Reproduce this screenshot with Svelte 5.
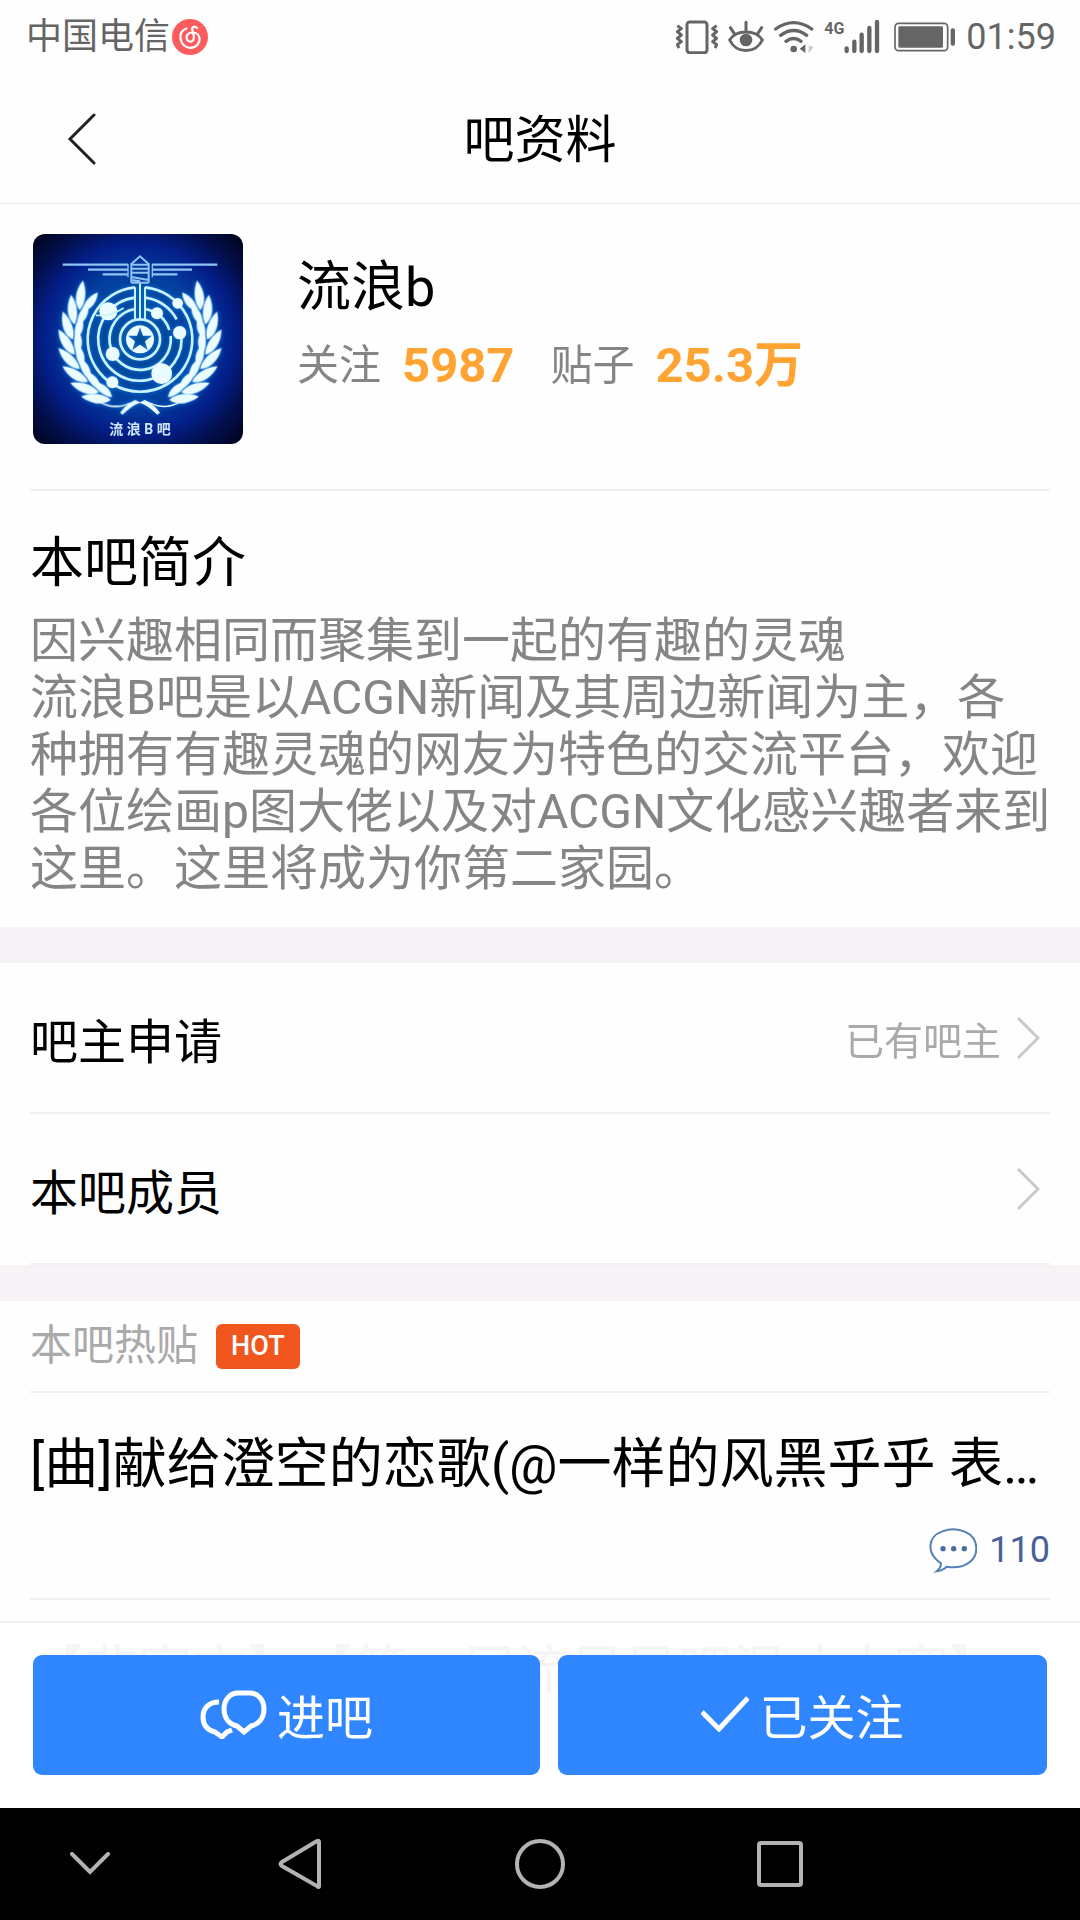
<script>
  const forum = {
    name: '流浪b',
    follows: '5987',
    posts: '25.3万',
    intro: [
      '因兴趣相同而聚集到一起的有趣的灵魂',
      '流浪B吧是以ACGN新闻及其周边新闻为主，各种拥有有趣灵魂的网友为特色的交流平台，欢迎各位绘画p图大佬以及对ACGN文化感兴趣者来到这里。这里将成为你第二家园。'
    ]
  };

  const links = [
    { label: '吧主申请', note: '已有吧主' },
    { label: '本吧成员', note: '' }
  ];

  const threads = [
    { title: '[曲]献给澄空的恋歌(@一样的风黑乎乎 表…', replies: 110 },
    { title: '【非官方】【第一届流星星吧温才大赛】', replies: 0 }
  ];

  // Laurel leaves, as rotations around the centre of the emblem
  const leafAngles = [-63, -76, -89, -102, -115, -128, -141, -153];

  // Dots sitting on the orbits: x, y, radius
  const planets = [
    [265, 274, 27],
    [411, 280, 18],
    [473, 250, 16],
    [479, 338, 20],
    [278, 402, 21],
    [425, 461, 31],
    [277, 487, 18]
  ];
</script>

<div class="page">
  <div class="status">
    <div class="carrier">
      <span>中国电信</span>
      <svg width="36" height="36" viewBox="0 0 36 36" aria-hidden="true">
        <circle cx="18" cy="18" r="18" fill="#fd5c5c" />
        <g fill="none" stroke="#fff" stroke-width="2.2" stroke-linecap="round">
          <path d="M14.500 9.500C10 11 8 15 8.500 19.500C9.200 25 13.500 29 18.500 28.800C24.500 28.500 28 24 27.600 19.500C27.200 15.500 24 13.500 20 13.500C16 13.700 14.200 16.500 14.600 19.200C15 22 18 23.500 20.500 21.800C23 20 22 17 21 13.500L20.200 10.500C20 7.500 22.500 7 25 8.800" />
        </g>
      </svg>
    </div>
    <div class="indicators">
      <svg width="42" height="34" viewBox="54 57 126 102" fill="none" stroke="#656565" aria-hidden="true">
        <rect x="87" y="63" width="60" height="92" rx="8" stroke-width="9" />
        <path d="M58 74l12 9-12 9 12 10-12 10 12 10-12 9 5 10M176 74l-12 9 12 9-12 10 12 10-12 10 12 9-5 10" stroke-width="9" stroke-linejoin="round" />
      </svg>
      <svg width="36" height="34" viewBox="216 60 108 102" fill="none" stroke="#656565" stroke-width="9" stroke-linecap="round" aria-hidden="true">
        <path d="M221 120C240 88 300 88 319 120C300 162 240 162 221 120Z" />
        <path d="M270 67v23M223 83l12 18M317 83l-12 18" />
        <circle cx="270" cy="120" r="19" fill="#656565" stroke="none" />
      </svg>
      <svg width="40" height="34" viewBox="352 57 120 102" fill="none" stroke="#656565" stroke-width="10" stroke-linecap="round" aria-hidden="true">
        <path d="M357 84Q411 46 465 84M372 103Q411 74 450 103M388 121Q411 104 433 121" />
        <circle cx="411" cy="144" r="10" fill="#656565" stroke="none" />
        <path d="M446 130v26l-17-13z" fill="#656565" stroke="none" />
        <path d="M456 133v24l15-18z" fill="#ccc" stroke="none" />
      </svg>
      <div class="signal">
        <span>4G</span>
        <svg width="36" height="34" viewBox="554 57 108 102" stroke="#656565" stroke-width="13" stroke-linecap="round" aria-hidden="true">
          <path d="M562 142v8M585 122v28M607 101v49M630 81v69M653 63v87" />
        </svg>
      </div>
      <svg width="62" height="30" viewBox="706 64 186 90" aria-hidden="true">
        <rect x="709" y="68" width="158" height="82" rx="11" fill="none" stroke="#656565" stroke-width="5" />
        <rect x="719" y="77" width="134" height="64" rx="4" fill="#656565" />
        <rect x="876" y="83" width="13" height="52" rx="6" fill="#656565" />
      </svg>
      <time>01:59</time>
    </div>
  </div>

  <header>
    <button class="back" aria-label="返回">
      <svg width="30" height="54" viewBox="0 0 30 54" aria-hidden="true">
        <path d="M28 3L4 27L28 51" fill="none" stroke="#222" stroke-width="3" stroke-linecap="round" />
      </svg>
    </button>
    <h1>吧资料</h1>
  </header>

  <main>
    <section class="profile">
      <svg class="avatar" viewBox="39 42 630 630" role="img" aria-label="流浪B吧">
        <defs>
          <radialGradient id="sky" cx="50%" cy="50%" r="68%">
            <stop offset="0" stop-color="#044a94" />
            <stop offset="0.45" stop-color="#04409f" />
            <stop offset="0.66" stop-color="#031f8a" />
            <stop offset="0.84" stop-color="#020f4c" />
            <stop offset="1" stop-color="#010522" />
          </radialGradient>
          <filter id="glow" x="-20%" y="-20%" width="140%" height="140%">
            <feGaussianBlur stdDeviation="7" />
          </filter>
          <g id="branch">
            {#each leafAngles as angle}
              <g transform="rotate({angle}) translate(0 -203)">
                <path d="M-4 2C6 -22 38 -38 80 -30C58 -6 28 8 -4 2Z" />
                <path d="M-4 10C20 2 50 8 68 26C40 38 12 32 -4 10Z" />
              </g>
            {/each}
            <path d="M-150 168C-90 214 -50 200 -14 182L2 190C-20 196 -38 212 -52 226L-60 220C-50 208 -44 200 -34 194C-70 212 -110 206 -150 168Z" />
          </g>
          <g id="emblem">
            <g transform="translate(360 358)" stroke="none">
              <use href="#branch" />
              <use href="#branch" transform="scale(-1 1)" />
            </g>
            <g fill="none" stroke-width="8">
              <path d="M345 202A157 157 0 1 0 375 202" />
              <path d="M345 202V298M375 202V298M360 190V300" stroke-width="6" />
              <path d="M345 233A125 125 0 1 0 482 332" />
              <path d="M375 233A125 125 0 0 1 470 298" />
              <path d="M345 267A92 92 0 1 0 452 348" />
              <path d="M375 267A92 92 0 0 1 448 330" />
              <circle cx="360" cy="358" r="60" />
            </g>
            <path stroke="none" fill-rule="evenodd" d="M360 316a42 42 0 1 0 .1 0zM360 322l9 25h27l-21 17 8 26-23-16-23 16 8-26-21-17h27z" />
            {#each planets as [x, y, r]}
              <circle cx={x} cy={y} {r} stroke="none" />
            {/each}
            <path d="M228 286Q270 290 311 264" fill="none" stroke-width="5" />
          </g>
        </defs>
        <rect x="39" y="42" width="630" height="630" fill="url(#sky)" />
        <use href="#emblem" fill="#1482e8" stroke="#1482e8" filter="url(#glow)" />
        <use href="#emblem" fill="#eafcff" stroke="#c9f3ff" />
        <g fill="none" stroke="#8fc4f4" stroke-width="7">
          <path d="M128 134H324M204 149H324M248 163H324M592 134H396M516 149H396M472 163H396" />
          <path d="M324 132V172M397 132V172" stroke-width="4" />
          <path d="M334 188V132L360 109L386 132V188M334 134H386M334 146H386M334 158H386M334 171L386 180M334 180L360 184M334 188H386" stroke-width="6" />
        </g>
        <text x="360" y="642" text-anchor="middle">流 浪 B 吧</text>
      </svg>
      <div class="summary">
        <h2>{forum.name}</h2>
        <dl>
          <div><dt>关注</dt><dd>{forum.follows}</dd></div>
          <div><dt>贴子</dt><dd>{forum.posts}</dd></div>
        </dl>
      </div>
    </section>

    <section class="intro">
      <h2>本吧简介</h2>
      {#each forum.intro as line}
        <p>{line}</p>
      {/each}
    </section>

    <nav class="links">
      {#each links as link}
        <a href="#top">
          <span>{link.label}</span>
          <span class="note">{link.note}</span>
          <svg width="24" height="44" viewBox="0 0 24 44" aria-hidden="true">
            <path d="M2 2L22 22L2 42" fill="none" stroke="#c8c8cc" stroke-width="3" />
          </svg>
        </a>
      {/each}
    </nav>

    <section class="hot">
      <div class="hot-head">
        <h3>本吧热贴</h3>
        <span class="badge">HOT</span>
      </div>
      {#each threads as thread}
        <article>
          <a href="#top">{thread.title}</a>
          {#if thread.replies}
            <div class="replies">
              <svg width="48" height="45" viewBox="688 384 144 135" aria-hidden="true">
                <path d="M724 490C680 462 682 410 728 394C776 376 830 400 830 445C830 488 786 508 741 500Q728 512 711 514Q724 504 724 490Z" fill="none" stroke="#5580b8" stroke-width="6" />
                <g fill="#4a6aa5">
                  <circle cx="730" cy="446" r="8" />
                  <circle cx="762" cy="446" r="8" />
                  <circle cx="794" cy="446" r="8" />
                </g>
              </svg>
              <span>{thread.replies}</span>
            </div>
          {/if}
        </article>
      {/each}
    </section>
  </main>

  <div class="dock">
    <div class="actions">
      <button class="enter">
        <svg width="67" height="49" viewBox="0 0 67 49" fill="none" stroke="#fff" stroke-width="5" aria-hidden="true">
          <path d="M38 3H50C58 3 64 10 64 19C64 28 59 34 51 36L44 42L37 36C29 34 24 28 24 19C24 10 30 3 38 3Z" />
          <path d="M19 12C9 12 3 18 3 27C3 35 7 40 15 42L22 47L27 42L32 40" />
        </svg>
        进吧
      </button>
      <button class="followed">
        <svg width="48" height="36" viewBox="0 0 48 36" aria-hidden="true">
          <path d="M1 16L18 33L47 2" fill="none" stroke="#fff" stroke-width="5" />
        </svg>
        已关注
      </button>
    </div>
    <div class="keys">
      <button aria-label="收起">
        <svg width="40" height="24" viewBox="0 0 40 24"><path d="M2 2L20 20L38 2" /></svg>
      </button>
      <button aria-label="后退">
        <svg width="44" height="52" viewBox="0 0 44 52"><path d="M41 4V48Q41 50 39 48L4 28Q1 26 4 24L39 3Q41 2 41 4Z" /></svg>
      </button>
      <button aria-label="主页">
        <svg width="50" height="50" viewBox="0 0 50 50"><circle cx="25" cy="25" r="23" /></svg>
      </button>
      <button aria-label="最近任务">
        <svg width="46" height="46" viewBox="0 0 46 46"><rect x="2" y="2" width="42" height="42" rx="2" /></svg>
      </button>
    </div>
  </div>
</div>

<style>
  :global(body) {
    margin: 0;
    background: #fefefe;
  }

  .page {
    box-sizing: border-box;
    height: 100vh;
    overflow: hidden;
    font-family: Roboto, 'Noto Sans CJK SC', sans-serif;
    text-spacing-trim: space-all;
    color: #000;
  }

  h1, h2, h3, p, dl, dd {
    margin: 0;
    font-weight: 400;
  }

  svg {
    display: block;
    flex-shrink: 0;
  }

  a {
    color: inherit;
    text-decoration: none;
  }

  button {
    padding: 0;
    border: none;
    background: none;
    font: inherit;
    cursor: pointer;
  }

  .status {
    display: flex;
    justify-content: space-between;
    align-items: center;
    height: 74px;
    padding: 0 24px 0 26px;
    font-size: 36px;
    line-height: 48px;
    color: #656565;
  }

  .carrier,
  .indicators {
    display: flex;
    align-items: center;
  }

  .carrier {
    gap: 2px;
  }

  .indicators {
    gap: 10px;
  }

  .signal {
    display: flex;
    align-items: flex-start;
    padding-right: 4px;
  }

  .signal span {
    font-size: 16px;
    line-height: 18px;
    font-weight: 700;
  }

  header {
    display: grid;
    grid-template-columns: 160px 1fr 160px;
    align-items: center;
    height: 129px;
    border-bottom: 1px solid #eee;
  }

  .back {
    display: flex;
    align-items: center;
    height: 100%;
    padding-left: 66px;
  }

  h1 {
    padding-top: 4px;
    font-size: 51px;
    line-height: 72px;
    text-align: center;
  }

  .profile {
    display: flex;
    align-items: flex-start;
    gap: 54px;
    margin: 0 30px;
    padding: 30px 3px 45px;
    border-bottom: 2px solid #f0f0f0;
  }

  .avatar {
    width: 210px;
    height: 210px;
    border-radius: 12px;
  }

  .avatar text {
    fill: #cfe6fb;
    font-size: 42px;
    font-weight: 700;
  }

  .summary {
    padding-top: 18px;
  }

  h2 {
    font-size: 54px;
    line-height: 72px;
  }

  dl {
    display: flex;
    gap: 36px;
    margin-top: 12px;
  }

  dl div {
    display: flex;
    align-items: center;
    gap: 21px;
    line-height: 60px;
  }

  dt {
    font-size: 42px;
    color: #858585;
  }

  dd {
    font-size: 49px;
    font-weight: 700;
    color: #ffa432;
  }

  .intro {
    padding: 37px 28px 30px 30px;
  }

  .intro h2 {
    margin-bottom: 12px;
  }

  .intro p {
    font-size: 48px;
    line-height: 57px;
    color: #858585;
  }

  .links {
    border-top: 36px solid #f6f2f6;
    border-bottom: 36px solid #f6f2f6;
    padding: 0 30px;
  }

  .links a {
    display: flex;
    align-items: center;
    gap: 15px;
    height: 149px;
    padding-right: 10px;
    border-bottom: 2px solid #f0f0f2;
    font-size: 48px;
  }

  .note {
    margin-left: auto;
    font-size: 39px;
    color: #aaa;
  }

  .hot {
    padding: 0 30px;
  }

  .hot-head {
    display: flex;
    align-items: center;
    gap: 18px;
    height: 90px;
    border-bottom: 2px solid #f0f0f2;
  }

  h3 {
    font-size: 42px;
    line-height: 60px;
    color: #aaa;
  }

  .badge {
    padding: 0 15px;
    border-radius: 6px;
    background: #f0561d;
    color: #fff;
    font-size: 27px;
    line-height: 45px;
    font-weight: 500;
  }

  article {
    padding: 36px 0 24px;
    border-bottom: 2px solid #f0f0f2;
  }

  article a {
    display: block;
    overflow: hidden;
    font-size: 54px;
    line-height: 72px;
    white-space: nowrap;
  }

  .replies {
    display: flex;
    justify-content: flex-end;
    align-items: center;
    gap: 12px;
    margin-top: 25px;
    font-size: 36px;
    line-height: 48px;
    color: #4a5f96;
  }

  .dock {
    position: fixed;
    right: 0;
    bottom: 0;
    left: 0;
  }

  .actions {
    display: flex;
    gap: 18px;
    padding: 32px 33px 33px;
    border-top: 2px solid #f0f0f0;
    background: rgba(255, 255, 255, 0.96);
  }

  .actions button {
    display: flex;
    justify-content: center;
    align-items: center;
    gap: 10px;
    height: 120px;
    padding-bottom: 2px;
    border-radius: 9px;
    background: #3086ff;
    color: #fff;
    font-size: 48px;
  }

  .enter {
    flex: 507;
  }

  .followed {
    flex: 489;
  }

  .keys {
    display: grid;
    grid-template-columns: 3fr 4fr 4fr 4fr 3fr;
    height: 112px;
    background: #000;
  }

  .keys button {
    display: flex;
    justify-content: center;
    align-items: center;
  }

  .keys svg {
    fill: none;
    stroke: #b3b3b3;
    stroke-width: 4;
    stroke-linecap: round;
  }
</style>
